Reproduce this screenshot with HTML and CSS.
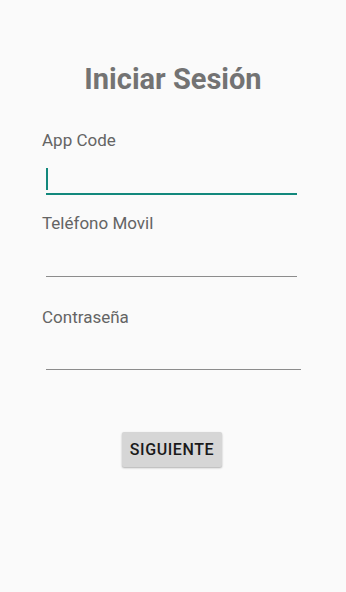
FILE: index.html
```html
<!DOCTYPE html>
<html lang="es">
<head>
<meta charset="utf-8">
<title>Iniciar Sesión</title>
<link rel="stylesheet" href="styles.css">
</head>
<body>
<main class="screen">
  <h1 class="title">Iniciar Sesión</h1>
  <form class="form">
    <label class="label label-first">App Code</label>
    <div class="field field-focused"><span class="cursor"></span></div>
    <label class="label label-second">Teléfono Movil</label>
    <div class="field field-phone"></div>
    <label class="label label-third">Contraseña</label>
    <div class="field field-pass"></div>
  </form>
  <div class="actions">
    <button class="btn" type="button">SIGUIENTE</button>
  </div>
</main>
</body>
</html>
```
FILE: styles.css
```css
html, body {
  margin: 0;
  padding: 0;
  background: #fafafa;
}
body {
  font-family: Roboto, "Noto Sans", sans-serif;
  width: 346px;
  height: 592px;
  overflow: hidden;
}
.screen {
  display: flex;
  flex-direction: column;
}
.title {
  margin: 62px 0 0 0;
  font-size: 29px;
  line-height: 34px;
  font-weight: 700;
  color: #737373;
  text-align: center;
}
.form {
  display: flex;
  flex-direction: column;
  padding-left: 42px;
}
.label {
  font-size: 17px;
  line-height: 20px;
  color: #646464;
}
.label-first { margin-top: 34px; }
.label-second { margin-top: 18px; }
.label-third { margin-top: 30px; }
.field {
  margin-left: 4px;
  width: 251px;
  box-sizing: border-box;
  display: flex;
  align-items: flex-end;
}
.field-focused {
  height: 45px;
  border-bottom: 2px solid #12887c;
}
.cursor {
  width: 2px;
  height: 22px;
  margin-bottom: 3px;
  background: #12887c;
}
.field-phone {
  height: 44px;
  border-bottom: 1px solid #8c8c8c;
}
.field-pass {
  width: 255px;
  height: 43px;
  border-bottom: 1px solid #8c8c8c;
}
.actions {
  display: flex;
  justify-content: center;
  margin-top: 62px;
}
.btn {
  width: 100px;
  height: 35px;
  margin-right: 2px;
  border: none;
  border-radius: 2px;
  background: #d6d6d6;
  box-shadow: 0 1px 2px rgba(0, 0, 0, 0.3);
  font-family: Roboto, "Noto Sans", sans-serif;
  font-size: 16px;
  font-weight: 500;
  letter-spacing: 0.6px;
  color: #1a1a1a;
  padding: 0;
}
```
